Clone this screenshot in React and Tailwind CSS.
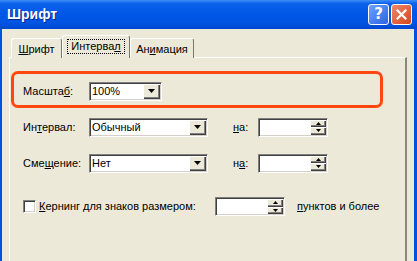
import React from "react";

const sunken =
  "border border-t-[#808080] border-l-[#808080] border-b-white border-r-white shadow-[inset_1px_1px_0_#404040,inset_-1px_-1px_0_#d4d0c8] bg-white";
const raised =
  "bg-[#ece9d8] shadow-[inset_1px_1px_0_#ffffff,inset_-1px_-1px_0_#404040,inset_-2px_-2px_0_#808080]";

function Arrow({ up, small }) {
  const w = small ? 5 : 7;
  const h = small ? 3 : 4;
  return (
    <svg width={w} height={h} viewBox={`0 0 ${w} ${h}`} className="block">
      <path d={up ? `M${w / 2} 0 L${w} ${h} L0 ${h} Z` : `M0 0 L${w} 0 L${w / 2} ${h} Z`} fill="#000" />
    </svg>
  );
}

function Combo({ value, width }) {
  return (
    <div className={`${sunken} h-[19px] flex items-stretch ${width}`}>
      <div className="flex-1 flex items-center pl-[2px] leading-none">{value}</div>
      <div className={`${raised} w-[17px] m-[1px] flex items-center justify-center`}>
        <Arrow />
      </div>
    </div>
  );
}

function Spin({ width }) {
  return (
    <div className={`${sunken} h-[19px] flex items-stretch ${width}`}>
      <div className="flex-1" />
      <div className="w-[16px] m-[1px] flex flex-col">
        <div className={`${raised} flex-1 flex items-center justify-center`}>
          <Arrow up small />
        </div>
        <div className={`${raised} flex-1 flex items-center justify-center`}>
          <Arrow small />
        </div>
      </div>
    </div>
  );
}

function Tab({ children, active, width }) {
  if (active) {
    return (
      <div
        className={`${width} h-[23px] bg-[#ece9d8] border-t border-l border-white border-r border-r-[#7a786c] rounded-t-[3px] flex items-center justify-center pb-[1px]`}
      >
        <span className="border border-dotted border-black px-[3px] py-[1px] leading-none">{children}</span>
      </div>
    );
  }
  return (
    <div
      className={`${width} h-[20px] bg-[#ece9d8] border-t border-l border-white border-r border-r-[#7a786c] rounded-t-[3px] flex items-center justify-center pt-[1px]`}
    >
      <span className="leading-none">{children}</span>
    </div>
  );
}

export default function App() {
  return (
    <div className="w-[417px] h-[261px] overflow-hidden flex flex-col bg-[#0052e0] font-['Liberation_Sans',Tahoma,sans-serif] text-[11px] text-black">
      {/* title bar */}
      <div className="h-[29px] shrink-0 flex items-center pl-[7px] pr-[5px] bg-[linear-gradient(to_bottom,#3d8ff7_0%,#0d62ea_12%,#0058e6_45%,#0054e2_80%,#0047cf_100%)]">
        <span className="flex-1 text-white font-bold text-[14px] [text-shadow:1px_1px_0_#0a248a]">
          Шрифт
        </span>
        <div className="flex gap-[2px]">
          <div className="w-[21px] h-[21px] rounded-[3px] border border-white bg-[linear-gradient(to_bottom_right,#6ea2fb,#2a63e4)] flex items-center justify-center text-white font-bold text-[15px] leading-none font-['DejaVu_Sans',sans-serif]">
            ?
          </div>
          <div className="w-[21px] h-[21px] rounded-[3px] border border-white bg-[linear-gradient(to_bottom_right,#f0886a,#d8441c)] flex items-center justify-center">
            <svg width="11" height="11" viewBox="0 0 11 11">
              <path d="M1.5 1.5 L9.5 9.5 M9.5 1.5 L1.5 9.5" stroke="#fff" strokeWidth="2.2" strokeLinecap="square" />
            </svg>
          </div>
        </div>
      </div>

      {/* body */}
      <div className="flex-1 ml-[2px] mr-[3px] bg-[#ece9d8] pl-[7px] pr-[7px] pt-[6px] flex flex-col">
        <div className="flex items-end h-[23px] pl-[2px] -mb-px relative z-10">
          <Tab width="w-[51px]">
            <u>Ш</u>рифт
          </Tab>
          <Tab width="w-[68px]" active>
            Интерва<u>л</u>
          </Tab>
          <Tab width="w-[64px]">
            Ан<u>и</u>мация
          </Tab>
        </div>

        <div className="flex-1 border-t border-l border-white border-r-2 border-r-[#8a887c] pl-[1px] pt-[13px] flex flex-col">
          {/* highlighted row */}
          <div className="w-[372px] h-[37px] border-[3px] border-[#ff4810] rounded-[7px] flex items-center pl-[9px] pt-[3px]">
            <span className="w-[66px]">
              Масшта<u>б</u>:
            </span>
            <Combo value="100%" width="w-[73px]" />
          </div>

          <div className="flex items-center pl-[12px] mt-[9px] h-[20px]">
            <span className="w-[66px]">
              Ин<u>т</u>ервал:
            </span>
            <Combo value="Обычный" width="w-[119px]" />
            <span className="w-[25px] ml-[25px]">
              <u>н</u>а:
            </span>
            <Spin width="w-[70px]" />
          </div>

          <div className="flex items-center pl-[12px] mt-[16px] h-[20px]">
            <span className="w-[66px]">
              Сме<u>щ</u>ение:
            </span>
            <Combo value="Нет" width="w-[119px]" />
            <span className="w-[25px] ml-[25px]">
              н<u>а</u>:
            </span>
            <Spin width="w-[70px]" />
          </div>

          <div className="flex items-center pl-[12px] mt-[24px] h-[19px]">
            <div className={`${sunken} w-[13px] h-[13px]`} />
            <span className="w-[176px] ml-[3px]">
              <u>К</u>ернинг для знаков размером:
            </span>
            <Spin width="w-[70px]" />
            <span className="ml-[12px]">
              <u>п</u>унктов и более
            </span>
          </div>
        </div>
      </div>
    </div>
  );
}
